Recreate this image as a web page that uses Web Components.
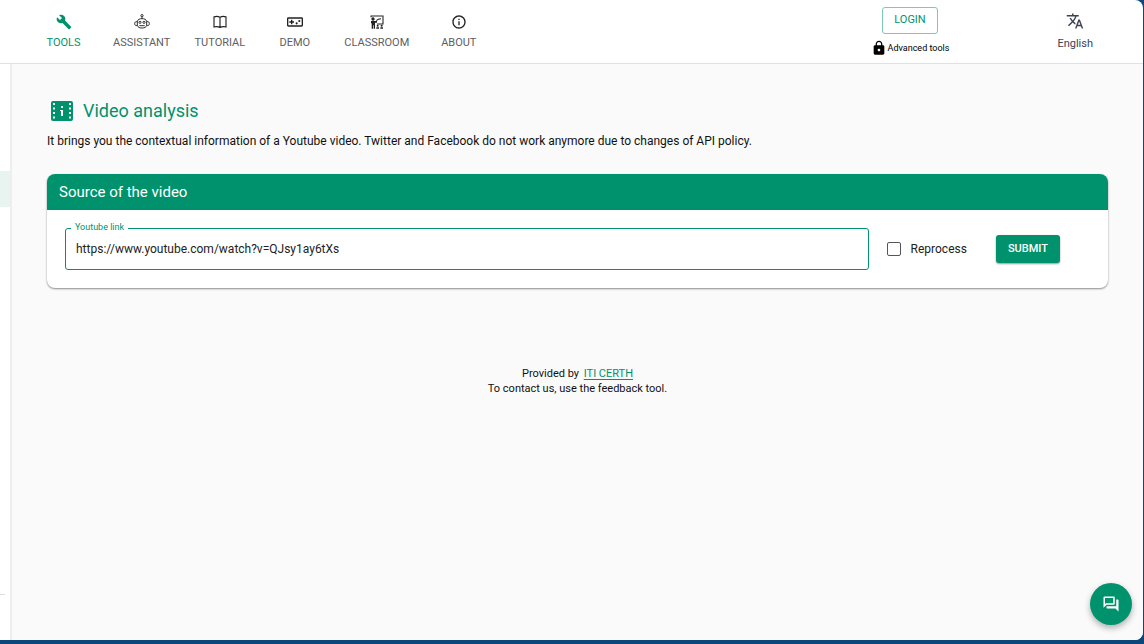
<!DOCTYPE html>
<html lang="en">
<head>
<meta charset="utf-8">
<title>Video analysis</title>
<style>
  html, body { margin: 0; height: 100%; }
  body {
    --green: #00926c;
    --line: #e0e0e0;
    background: #0b477b;
    color: #111;
    font-family: Roboto, "Liberation Sans", sans-serif;
    font-size: 12px;
  }
</style>
</head>
<body>
<app-shell>
  <app-header slot="header">
    <nav-tab active icon="wrench">Tools</nav-tab>
    <nav-tab icon="robot">Assistant</nav-tab>
    <nav-tab icon="book">Tutorial</nav-tab>
    <nav-tab icon="gamepad">Demo</nav-tab>
    <nav-tab icon="classroom">Classroom</nav-tab>
    <nav-tab icon="info">About</nav-tab>
    <login-box slot="end"></login-box>
    <language-menu slot="end">English</language-menu>
  </app-header>
  <page-title>Video analysis
    <span slot="description">It brings you the contextual information of a Youtube video. Twitter and Facebook do not work anymore due to changes of API policy.</span>
  </page-title>
  <content-card heading="Source of the video">
    <video-form></video-form>
  </content-card>
  <provider-note></provider-note>
  <feedback-button slot="floating"></feedback-button>
</app-shell>

<script>
const icons = {
  wrench: '<path d="m22.7 19-9.1-9.1c.9-2.3.4-5-1.5-6.9-2-2-5-2.4-7.4-1.3L9 6 6 9 1.6 4.7C.4 7.1.9 10.1 2.9 12.1c1.9 1.9 4.6 2.4 6.9 1.5l9.1 9.1c.4.4 1 .4 1.4 0l2.3-2.3c.5-.4.5-1.1.1-1.4z"/>',
  robot: '<g fill="none" stroke="currentColor" stroke-width="1.4"><circle cx="12" cy="2.5" r="1.7"/><path d="M12 4.2V7M5 11c1-3 3-4 7-4s6 1 7 4v6c-1 3-3 4-7 4s-6-1-7-4zM5 11.5c-3-.5-4 1-4 3s1 3 4 3M19 11.5c3-.5 4 1 4 3s-1 3-4 3M8 17.5h8"/><circle cx="9" cy="12.5" r="1.6"/><circle cx="15" cy="12.5" r="1.6"/></g>',
  book: '<path fill="none" stroke="currentColor" stroke-width="1.700" d="M12 5v15M12 5C9 3.300 6 3.300 3 4.300v15.200c3-1 6-1 9 .8 3-1.800 6-1.800 9-.8V4.300c-3-1-6-1-9 .7z"/>',
  gamepad: '<path fill-rule="evenodd" d="M2 5h20c1.100 0 2 .9 2 2v10c0 1.100-.9 2-2 2H2c-1.100 0-2-.9-2-2V7c0-1.100.9-2 2-2zm0 2v10h20V7zM6 8.500h2V11h2.500v2H8v2.500H6V13H3.500v-2H6z"/><circle cx="14.500" cy="14" r="1.600"/><circle cx="18.500" cy="10.500" r="1.600"/>',
  classroom: '<path fill="none" stroke="currentColor" stroke-width="1.600" d="M3 5V3h18v12h-9M11 10l3-2 4-1"/><circle cx="6" cy="7.500" r="2.500"/><path d="M3 10.500h9v2.500H9v9H7v-5H6v5H4v-8H3z"/><circle cx="13" cy="17.500" r="1.500"/><circle cx="19" cy="17.500" r="1.500"/><path d="M11 20h4v2h-4zM17 20h4v2h-4z"/>',
  info: '<path d="M11 7h2v2h-2zm0 4h2v6h-2zm1-9C6.480 2 2 6.480 2 12s4.480 10 10 10 10-4.480 10-10S17.520 2 12 2zm0 18c-4.410 0-8-3.590-8-8s3.590-8 8-8 8 3.590 8 8-3.590 8-8 8z"/>',
  lock: '<path d="M18 8h-1V6c0-2.760-2.240-5-5-5S7 3.240 7 6v2H6c-1.100 0-2 .9-2 2v10c0 1.100.9 2 2 2h12c1.100 0 2-.9 2-2V10c0-1.100-.9-2-2-2zm-6 9c-1.100 0-2-.9-2-2s.9-2 2-2 2 .9 2 2-.9 2-2 2zm3.100-9H8.900V6c0-1.710 1.390-3.100 3.100-3.100s3.100 1.390 3.100 3.100z"/>',
  translate: '<path d="M12.870 15.070l-2.540-2.510.03-.03c1.740-1.940 2.980-4.170 3.710-6.530H17V4h-7V2H8v2H1v1.990h11.170C11.500 7.920 10.440 9.750 9 11.350 8.070 10.320 7.300 9.190 6.690 8h-2c.73 1.630 1.730 3.170 2.980 4.560l-5.090 5.020L4 19l5-5 3.110 3.110zM18.500 10h-2L12 22h2l1.120-3h4.750L21 22h2zm-2.620 7l1.620-4.330L19.120 17z"/>',
  chat: '<path d="M15 4v7H5.170L4 12.170V4h11m1-2H3c-.55 0-1 .45-1 1v14l4-4h10c.55 0 1-.45 1-1V3c0-.55-.45-1-1-1zm5 4h-2v9H6v2c0 .55.45 1 1 1h11l4 4V7c0-.55-.45-1-1-1z"/>',
  film: '<path fill-rule="evenodd" d="M3 2h18a2 2 0 0 1 2 2v16a2 2 0 0 1-2 2H3a2 2 0 0 1-2-2V4a2 2 0 0 1 2-2zM3 4v2h2V4zm0 4.500v2h2v-2zM3 13v2h2v-2zm0 4.500v2h2v-2zM19 4v2h2V4zm0 4.500v2h2v-2zM19 13v2h2v-2zm0 4.500v2h2v-2zM11 7v2h2V7zm-1 4v1h1v5h2v-6z"/>'
};
const svg = (name, size) =>
  `<svg aria-hidden="true" viewBox="0 0 24 24" width="${size}" height="${size}" fill="currentColor">${icons[name]}</svg>`;

function define(name, render) {
  customElements.define(name, class extends HTMLElement {
    constructor() {
      super();
      const template = document.createElement('template');
      template.innerHTML = `<style>*{box-sizing:border-box} svg{display:block;flex:none} button,input{font-family:inherit}</style>` + render(this);
      this.attachShadow({ mode: 'open' }).append(template.content.cloneNode(true));
    }
  });
}

define('app-shell', () => `
  <style>
    :host { display: block; box-sizing: border-box; height: 100%; padding: 0 1px 4px 0; }
    .window { display: flex; flex-direction: column; height: 100%; background: #fff; border-radius: 0 8px 8px 0; overflow: hidden; }
    .body { display: flex; flex: 1; min-height: 0; }
    aside { display: flex; flex-direction: column; justify-content: space-between; width: 12px; flex: none; border-right: 2px solid #eee; padding: 107px 0 45px; }
    .selected { height: 36px; background: #e8f4f0; }
    hr { width: 5px; margin: 0; border: 0; border-top: 1px solid #ddd; }
    main { flex: 1; min-width: 0; background: #fafafa; padding: 35px 35px 0; overflow: auto; }
    .floating { position: fixed; right: 12px; bottom: 19px; }
  </style>
  <div class="window">
    <slot name="header"></slot>
    <div class="body">
      <aside><div class="selected"></div><hr></aside>
      <main><slot></slot></main>
    </div>
  </div>
  <div class="floating"><slot name="floating"></slot></div>`);

define('app-header', () => `
  <style>
    :host { display: block; flex: none; }
    header { display: flex; justify-content: space-between; border-bottom: 1px solid var(--line); height: 64px; padding: 0 50px 0 26px; }
    nav { display: flex; }
    .end { display: flex; gap: 108px; }
  </style>
  <header><nav><slot></slot></nav><div class="end"><slot name="end"></slot></div></header>`);

define('nav-tab', el => `
  <style>
    :host { display: block; color: #5e5e5e; }
    :host([active]) { color: var(--green); }
    a { display: flex; flex-direction: column; align-items: center; gap: 6px; min-width: 75px; padding: 14px 12px 0; color: inherit; text-decoration: none; text-transform: uppercase; font-size: 11px; line-height: 14px; }
    svg { color: #222; }
    :host([active]) svg { color: inherit; }
  </style>
  <a href="#">${svg(el.getAttribute('icon'), 16)}<span><slot></slot></span></a>`);

define('login-box', () => `
  <style>
    :host { display: flex; flex-direction: column; align-items: center; gap: 6px; padding-top: 7px; }
    button { height: 27px; padding: 0 11px 2px; border: 1px solid #7fc8b5; border-radius: 3px; background: none; color: var(--green); font-size: 11px; line-height: 14px; font-weight: 400; }
    p { display: flex; align-items: center; gap: 1px; margin: 0; color: #000; font-size: 9px; line-height: 14px; }
  </style>
  <button type="button">LOGIN</button>
  <p>${svg('lock', 16)}<span>Advanced tools</span></p>`);

define('language-menu', () => `
  <style>
    button { display: flex; flex-direction: column; align-items: center; gap: 6px; padding: 12px 0 0; border: 0; background: none; color: #3c4257; font-size: 11px; line-height: 15px; }
  </style>
  <button type="button">${svg('translate', 18)}<span><slot></slot></span></button>`);

define('page-title', () => `
  <style>
    :host { display: block; }
    h1 { display: flex; align-items: center; gap: 9px; margin: 0; padding-left: 3px; color: var(--green); font-size: 18px; line-height: 24px; font-weight: 400; }
    p { margin: 9px 0 0; font-size: 12px; line-height: 18px; }
  </style>
  <h1>${svg('film', 24)}<span><slot></slot></span></h1>
  <p><slot name="description"></slot></p>`);

define('content-card', el => `
  <style>
    :host { display: block; margin-top: 24px; }
    section { background: #fff; border-radius: 8px; overflow: hidden; box-shadow: 0 1px 2px rgba(0,0,0,.45); }
    h2 { margin: 0; padding: 8px 12px; background: var(--green); color: #fff; font-size: 15px; line-height: 20px; font-weight: 400; }
    .content { padding: 18px; }
  </style>
  <section><h2>${el.getAttribute('heading')}</h2><div class="content"><slot></slot></div></section>`);

define('video-form', () => `
  <style>
    :host { display: block; }
    form { display: flex; align-items: center; padding-right: 30px; }
    .field { position: relative; flex: 1; min-width: 0; }
    .field label { position: absolute; top: -7px; left: 6px; padding: 0 4px; background: #fff; color: var(--green); font-size: 9px; line-height: 12px; }
    .field input { display: block; width: 100%; height: 42px; padding: 0 10px; border: 1px solid var(--green); border-radius: 3px; outline: 0; background: #fff; color: #222; font-size: 12px; }
    .check { display: flex; align-items: center; gap: 10px; margin: 0 29px 0 18px; color: #222; font-size: 12px; line-height: 18px; }
    .check input { appearance: none; width: 14px; height: 14px; margin: 0; border: 1px solid #555; border-radius: 2px; background: #fff; }
    .check input:checked { background: var(--green); }
    button { height: 28px; padding: 0 12px 2px; border: 0; border-radius: 3px; background: var(--green); color: #fff; font-size: 11px; font-weight: 500; box-shadow: 0 1px 2px rgba(0,0,0,.4); }
  </style>
  <form>
    <div class="field"><label for="link">Youtube link</label><input id="link" type="text" value="https://www.youtube.com/watch?v=QJsy1ay6tXs"></div>
    <label class="check"><input type="checkbox"><span>Reprocess</span></label>
    <button type="button">SUBMIT</button>
  </form>`);

define('provider-note', () => `
  <style>
    :host { display: block; margin-top: 78px; text-align: center; font-size: 11px; line-height: 15px; }
    p { margin: 0; }
    a { margin-left: 2px; color: var(--green); text-underline-offset: 2px; }
  </style>
  <p>Provided by <a href="#">ITI CERTH</a></p>
  <p>To contact us, use the feedback tool.</p>`);

define('feedback-button', () => `
  <style>
    :host { display: block; }
    button { display: grid; place-items: center; width: 42px; height: 42px; padding: 0; border: 0; border-radius: 50%; background: var(--green); color: #fff; box-shadow: 0 3px 6px rgba(0,0,0,.3); }
  </style>
  <button type="button" aria-label="Send feedback">${svg('chat', 18)}</button>`);
</script>
</body>
</html>
